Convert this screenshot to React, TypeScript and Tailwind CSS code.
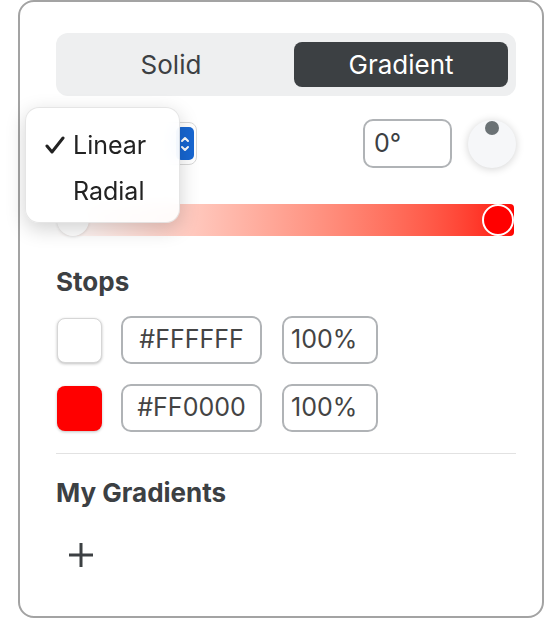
const stops = [
  { color: "#FFFFFF", swatch: "bg-white border border-[#d6d6d6]" },
  { color: "#FF0000", swatch: "bg-[#ff0000]" },
]

const App = () => {
  return (
    <div className="h-[618px] w-[546px] overflow-hidden bg-white font-['Inter','Liberation_Sans',sans-serif] text-[#3c4043]">
      <div className="relative ml-[18px] h-[618px] w-[526px] rounded-[16px] border-2 border-[#a3a3a3] pl-[36px] pr-[26px] pt-[31px]">
        {/* segmented control */}
        <div className="grid h-[63px] grid-cols-2 gap-4 rounded-[12px] bg-[#eeeff0] px-[8px] py-[9px] text-[26px]">
          <div className="flex items-center justify-center">Solid</div>
          <div className="flex items-center justify-center rounded-[8px] bg-[#3c4043] text-white">
            Gradient
          </div>
        </div>

        {/* type / angle row */}
        <div className="mt-[23px] flex h-[49px] items-center">
          <div className="ml-px flex h-[43px] w-[140px] items-center justify-end rounded-[8px] border border-[#d8d8d8] pr-[2px]">
            <div className="flex h-[33px] w-[18px] flex-col items-center justify-center rounded-[5px] bg-[#1766d1] text-white">
              <svg width="10" height="22" viewBox="0 0 10 22" fill="none" stroke="white" strokeWidth="2" strokeLinecap="round" strokeLinejoin="round">
                <path d="M2 8l3-3 3 3" />
                <path d="M2 14l3 3 3-3" />
              </svg>
            </div>
          </div>
          <div className="ml-auto flex h-[49px] w-[89px] items-center rounded-[10px] border-2 border-[#b0b3b6] pl-[9px] text-[25px]">
            0°
          </div>
          <div className="relative ml-[16px] h-[48px] w-[48px] rounded-full bg-[#f6f7f9] shadow-[0_1px_8px_rgba(0,0,0,0.18)]">
            <div className="absolute left-1/2 top-[1px] h-[14px] w-[14px] -translate-x-1/2 rounded-full bg-[#6b7275]" />
          </div>
        </div>

        {/* gradient bar */}
        <div className="relative mr-[2px] mt-[36px] h-[32px] rounded-[4px] bg-gradient-to-r from-white to-[#ff0000]">
          <div className="absolute left-px top-0 h-[32px] w-[32px] rounded-full border-2 border-white bg-white shadow-[0_1px_3px_rgba(0,0,0,0.12)]" />
          <div className="absolute right-0 top-0 h-[32px] w-[32px] rounded-full border-2 border-white bg-[#ff0000]" />
        </div>

        <div className="mt-[31px] text-[26px] font-bold leading-[30px]">Stops</div>

        <div className="mt-[19px] flex flex-col gap-[20px]">
          {stops.map((s) => (
            <div key={s.color} className="flex h-[48px] items-center">
              <div className={`ml-px h-[45px] w-[45px] rounded-[8px] shadow-[0_1px_3px_rgba(0,0,0,0.25)] ${s.swatch}`} />
              <div className="ml-[19px] flex h-[48px] w-[141px] items-center justify-center rounded-[10px] border-2 border-[#b0b3b6] text-[25px] text-[#444]">
                {s.color}
              </div>
              <div className="ml-[20px] flex h-[48px] w-[96px] items-center rounded-[10px] border-2 border-[#b0b3b6] pl-[7px] text-[25px] text-[#444]">
                100%
              </div>
            </div>
          ))}
        </div>

        <div className="mt-[21px] h-px bg-[#e2e2e2]" />

        <div className="mt-[24px] text-[26px] font-bold leading-[30px]">My Gradients</div>

        <div className="ml-[13px] mt-[35px]">
          <svg width="24" height="24" viewBox="0 0 24 24" fill="none" stroke="#3c4043" strokeWidth="3">
            <path d="M12 0v24M0 12h24" />
          </svg>
        </div>

        {/* open dropdown menu */}
        <div className="absolute left-[5px] top-[105px] h-[116px] w-[155px] rounded-[14px] border border-black/10 bg-white/90 text-[25px] text-[#222] shadow-[0_6px_20px_rgba(0,0,0,0.18)] backdrop-blur">
          <div className="absolute left-[19px] top-[22px] flex h-[30px] items-center">
            <svg width="20" height="18" viewBox="0 0 20 18" fill="none" stroke="#222" strokeWidth="3" strokeLinecap="round" strokeLinejoin="round">
              <path d="M2 10l5 6L18 2" />
            </svg>
            <span className="ml-[8px] leading-[30px]">Linear</span>
          </div>
          <div className="absolute left-[47px] top-[68px] leading-[30px]">Radial</div>
        </div>
      </div>
    </div>
  )
}

export default App
